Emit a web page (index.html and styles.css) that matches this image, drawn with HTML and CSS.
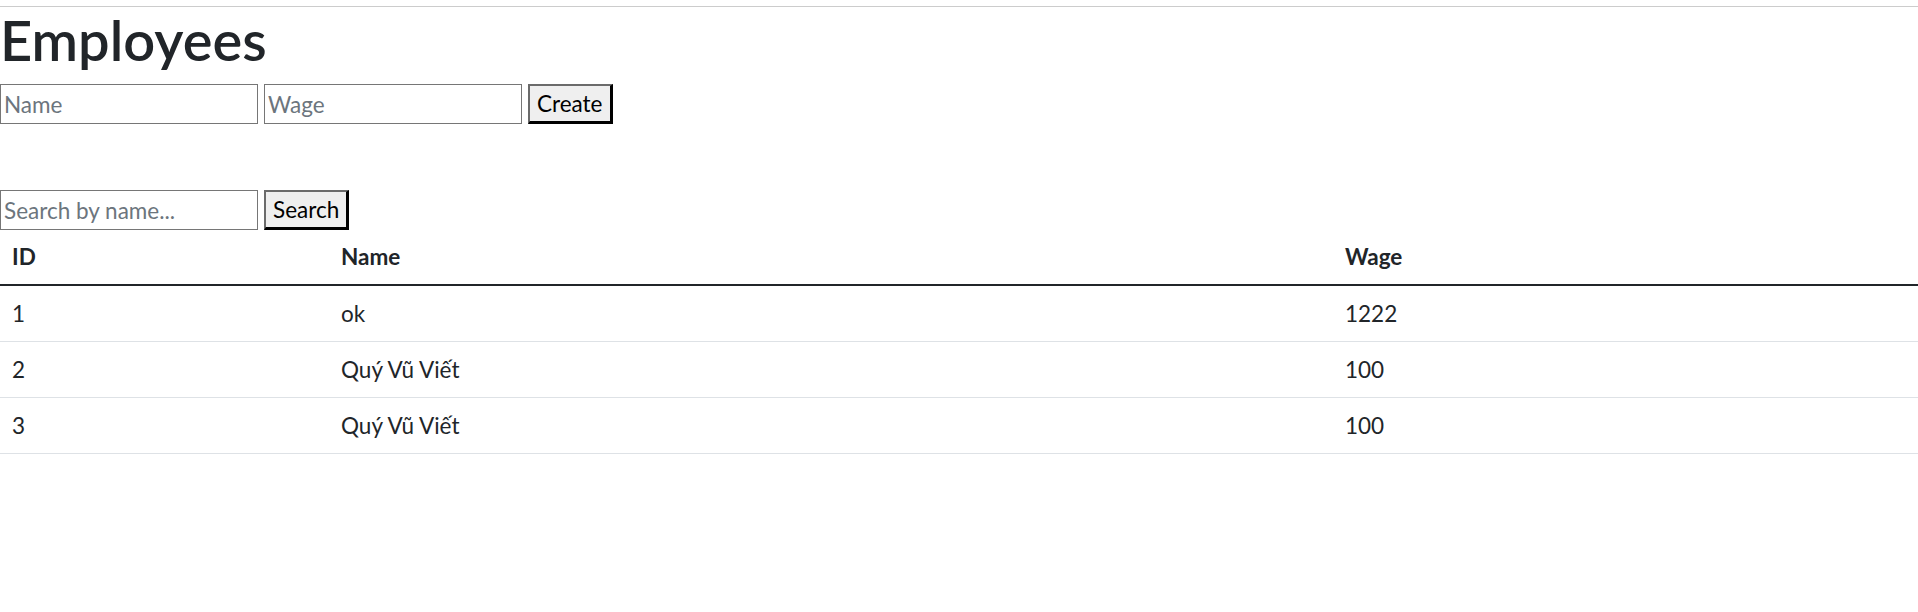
FILE: index.html
```html
<!DOCTYPE html>
<html lang="vi">
<head>
<meta charset="utf-8">
<title>Employees</title>
<link rel="stylesheet" href="styles.css">
</head>
<body>
<div class="topbar"></div>
<main class="page">
  <h1 class="title">Employees</h1>
  <form class="row">
    <input class="field" type="text" placeholder="Name">
    <input class="field" type="text" placeholder="Wage">
    <button class="btn" type="button">Create</button>
  </form>
  <form class="row search-row">
    <input class="field" type="text" placeholder="Search by name...">
    <button class="btn" type="button">Search</button>
  </form>
  <table class="grid">
    <colgroup>
      <col class="c-id">
      <col class="c-name">
      <col class="c-wage">
    </colgroup>
    <thead>
      <tr><th>ID</th><th>Name</th><th>Wage</th></tr>
    </thead>
    <tbody>
      <tr><td>1</td><td>ok</td><td>1222</td></tr>
      <tr><td>2</td><td>Quý Vũ Viết</td><td>100</td></tr>
      <tr><td>3</td><td>Quý Vũ Viết</td><td>100</td></tr>
    </tbody>
  </table>
</main>
</body>
</html>
```
FILE: styles.css
```css
html, body {
  margin: 0;
  padding: 0;
  background: #fff;
}
body {
  font-family: "Lato", "Open Sans", sans-serif;
  font-size: 22.5px;
  line-height: 36px;
  color: #212529;
}
.topbar {
  height: 6px;
  border-bottom: 1px solid #cccccc;
}
.title {
  margin: 0 0 12px;
  font-family: "Lato", "Open Sans", sans-serif;
  font-size: 56px;
  font-weight: 600;
  line-height: 65px;
}
.row {
  display: flex;
  gap: 6px;
  align-items: stretch;
  height: 40px;
  margin: 0;
}
.search-row {
  margin-top: 66px;
}
.field {
  box-sizing: border-box;
  width: 258px;
  height: 40px;
  margin: 0;
  padding: 0 3px;
  border: 1px solid #767676;
  font: inherit;
  color: #212529;
}
.field::placeholder {
  color: #6c757d;
}
.btn {
  box-sizing: border-box;
  height: 40px;
  margin: 0;
  padding: 0 7px;
  background: #efefef;
  border-style: solid;
  border-width: 2px 3px 3px 2px;
  border-color: #6b6b6b #000 #000 #6b6b6b;
  font: inherit;
  color: #000;
}
.grid {
  width: 100%;
  border-collapse: collapse;
  table-layout: fixed;
}
.c-id { width: 329px; }
.c-name { width: 1004px; }
.grid th, .grid td {
  padding: 0 12px;
  text-align: left;
  vertical-align: middle;
}
.grid th {
  height: 54px;
  font-weight: 700;
  border-bottom: 2px solid #212529;
}
.grid td {
  height: 55px;
  border-bottom: 1px solid #dee2e6;
}
```
